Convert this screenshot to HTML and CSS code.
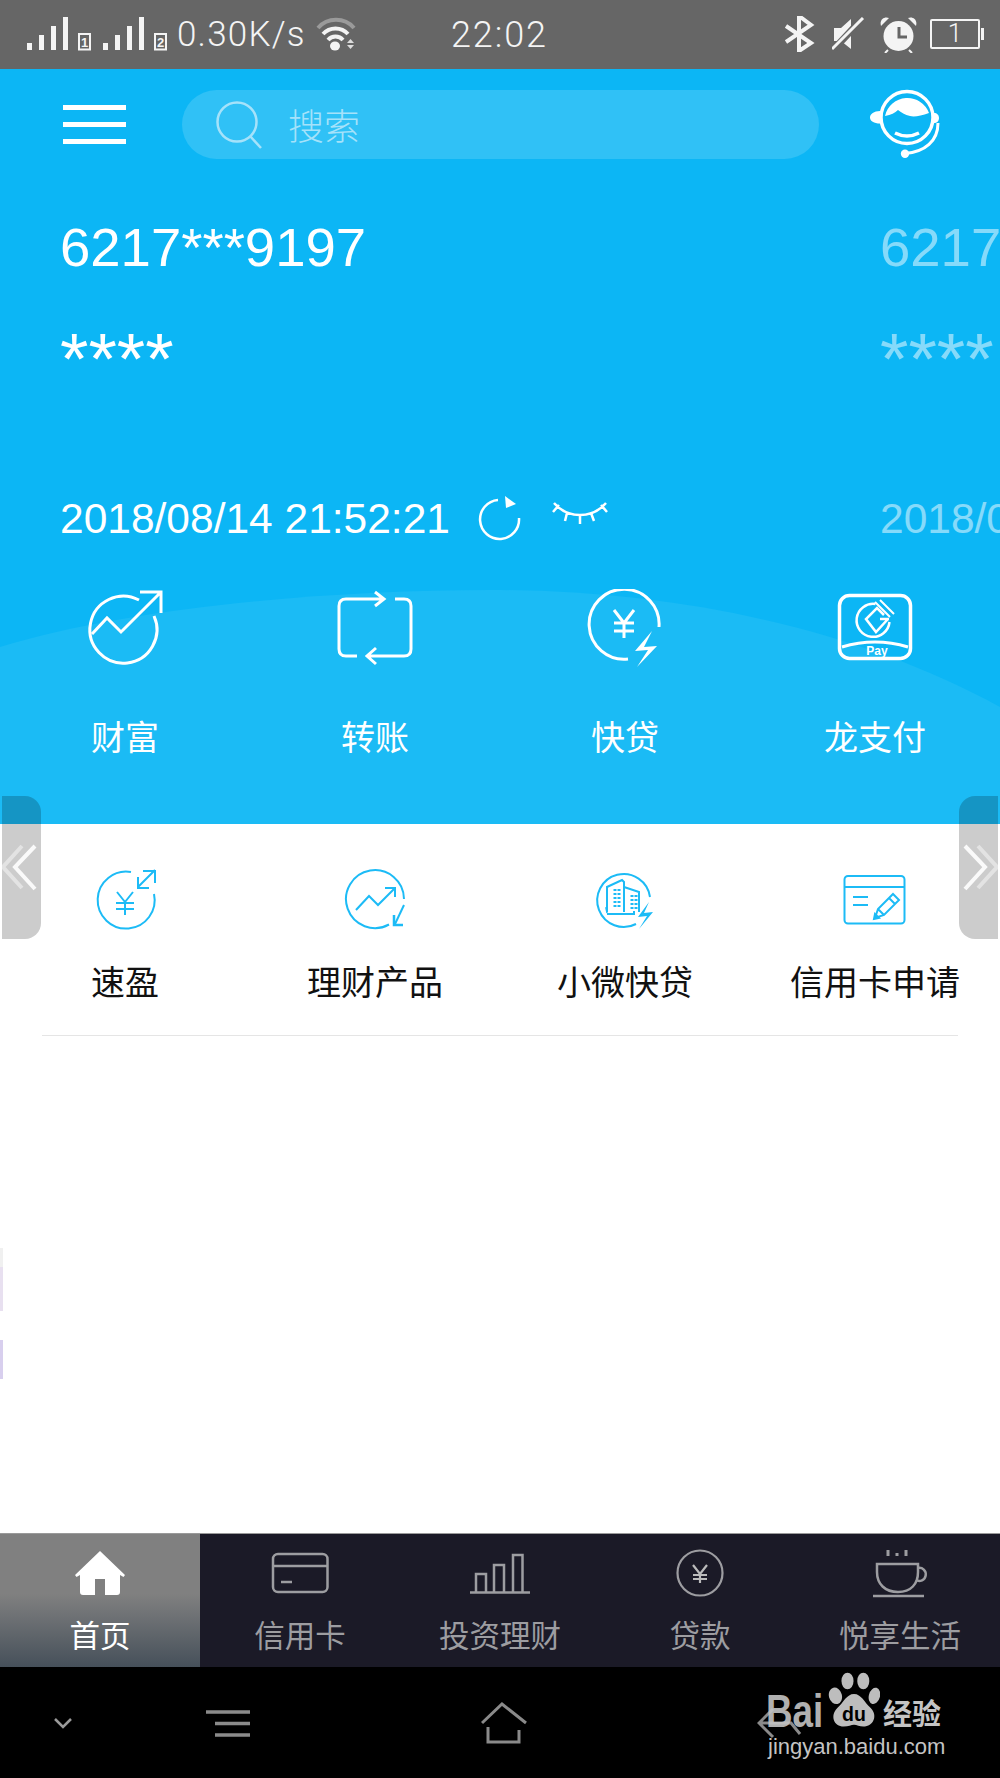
FILE: index.html
```html
<!DOCTYPE html>
<html lang="zh-CN">
<head>
<meta charset="utf-8">
<title>建设银行</title>
<link rel="stylesheet" href="styles.css">
</head>
<body>
<div class="phone">
  <header class="status">
    <svg class="signals" width="145" height="40" viewBox="27 14 145 40">
      <g fill="#f4f4f4">
        <rect x="27" y="43" width="5" height="7"/><rect x="39" y="35" width="5" height="15"/><rect x="51" y="26" width="5" height="24"/><rect x="63" y="17" width="5" height="33"/>
        <rect x="103" y="43" width="5" height="7"/><rect x="115" y="35" width="5" height="15"/><rect x="127" y="26" width="5" height="24"/><rect x="139" y="17" width="5" height="33"/>
      </g>
      <rect x="79" y="34" width="11" height="15.5" fill="none" stroke="#f4f4f4" stroke-width="2"/>
      <rect x="155" y="34" width="11" height="15.5" fill="none" stroke="#f4f4f4" stroke-width="2"/>
      <text x="84.5" y="47" class="sim">1</text>
      <text x="160.5" y="47" class="sim">2</text>
    </svg>
    <span class="speed">0.30K/s</span>
    <svg class="wifi" width="40" height="36" viewBox="315 16 40 36">
      <path d="M317 28a24 24 0 0 1 36 0" fill="none" stroke="#9a9a9a" stroke-width="4"/>
      <path d="M322 34a17 17 0 0 1 25 0" fill="none" stroke="#f4f4f4" stroke-width="4"/>
      <path d="M327 40a10 10 0 0 1 15 0" fill="none" stroke="#f4f4f4" stroke-width="4"/>
      <ellipse cx="334" cy="46" rx="5" ry="4.500" fill="#f4f4f4"/>
      <path d="M346 43l3.500-4 3.500 4zM346 45h7l-3.500 4z" fill="#ddd"/>
    </svg>
    <span class="clock">22:02</span>
    <div class="status-right">
      <svg width="36" height="36" viewBox="784 17 36 36"><path d="M786 27l25 17-12 8V17l12 9-25 17" fill="none" stroke="#f4f4f4" stroke-width="4"/></svg>
      <svg width="36" height="34" viewBox="832 19 36 34"><path d="M834 30h7l10-9v30l-10-8h-7z" fill="#f4f4f4"/><path d="M832 53l31-33" stroke="#666" stroke-width="7"/><path d="M832 51l31-31" stroke="#f4f4f4" stroke-width="3"/></svg>
      <svg width="38" height="37" viewBox="880 16 38 37"><circle cx="898.500" cy="36" r="15" fill="#f4f4f4"/><path d="M881 26c-2-7 4-10 8-8zM916 26c2-7-4-10-8-8z" fill="#f4f4f4"/><path d="M899 27v10h8" fill="none" stroke="#666" stroke-width="3"/><path d="M888 50l-3 3M909 50l3 3" stroke="#f4f4f4" stroke-width="2"/></svg>
      <div class="battery"><span>1</span></div>
    </div>
  </header>

  <main class="hero">
    <svg class="wave" width="1000" height="235" viewBox="0 589 1000 235"><path d="M0 647C130 607 330 590 490 590C680 590 860 630 1000 707V824H0z" fill="#1bbbf5"/></svg>
    <div class="topbar">
      <svg class="menu-icon" width="63" height="39" viewBox="0 0 63 39"><path d="M0 2.500h63M0 19.500h63M0 36.500h63" stroke="#fff" stroke-width="5"/></svg>
      <div class="search">
        <svg width="48" height="48" viewBox="0 0 48 48"><circle cx="21" cy="21" r="19.500" fill="none" stroke="#a5e2fa" stroke-width="2.500"/><path d="M34 35l11 12" stroke="#a5e2fa" stroke-width="2.500"/></svg>
        <span>搜索</span>
      </div>
      <svg class="agent" width="74" height="72" viewBox="868 87 74 72">
        <circle cx="907" cy="116.500" r="26" fill="none" stroke="#fff" stroke-width="3.500"/>
        <path d="M885 115a23 23 0 0 1 44-3c-8 3-15 4-19 3-5-1-9-4-12-6-3 3-7 5-13 6z" fill="#fff"/>
        <path d="M880 110c-6 0-10 3-10 6.500s4 6 10 6zM934 112c3 0 5 2 5 5s-2 5-5 5z" fill="#fff"/>
        <path d="M895 132q12 6 24 0" fill="none" stroke="#fff" stroke-width="3.500"/>
        <path d="M938 122c0 18-13 29-33 30.500" fill="none" stroke="#fff" stroke-width="3"/>
        <circle cx="905" cy="152.700" r="4.200" fill="#fff"/>
      </svg>
    </div>

    <div class="cards">
      <section class="card">
        <div class="card-no">6217***9197</div>
        <div class="card-mask">****</div>
        <div class="card-time">
          <span>2018/08/14 21:52:21</span>
          <svg class="refresh" width="46" height="46" viewBox="477 494 46 46"><path d="M498 499a19.500 19.500 0 1 0 21 18" fill="none" stroke="#fff" stroke-width="2.500"/><path d="M505 495l11 8-10 4z" fill="#fff"/></svg>
          <svg class="eye" width="58" height="26" viewBox="552 504 58 26"><path d="M555 507c14 16 38 16 52 0M554 516l6-7M566 525l2-8M581 528v-9M595 525l-3-8M608 516l-6-7" fill="none" stroke="#fff" stroke-width="2.500"/></svg>
        </div>
      </section>
      <section class="card card-next">
        <div class="card-no">6217***9197</div>
        <div class="card-mask">****</div>
        <div class="card-time"><span>2018/08/14 21:52:21</span></div>
      </section>
    </div>

    <nav class="quick">
      <a class="quick-item">
        <svg width="80" height="80" viewBox="84 590 80 80" fill="none" stroke="#fff" stroke-width="3">
          <path d="M138 601a33.500 33.500 0 1 0 15 16"/>
          <path d="M91 635l15-16 14 14 40-40M139 593h21v21"/>
        </svg>
        <span>财富</span>
      </a>
      <a class="quick-item">
        <svg width="80" height="80" viewBox="335 590 80 80" fill="none" stroke="#fff" stroke-width="3">
          <path d="M384 600h-38q-7 0-7 7v43q0 7 7 7h11M395 600h9q7 0 7 7v43q0 7-7 7h-37M375 593l9 7-9 7M376 649l-9 8 9 8"/>
        </svg>
        <span>转账</span>
      </a>
      <a class="quick-item">
        <svg width="80" height="80" viewBox="585 590 80 80" fill="none" stroke="#fff" stroke-width="3">
          <path d="M659 628a35 35 0 1 0-31 32"/>
          <path d="M614 611l10 13 10-13M624 624v15M614 624h20M614 632h20"/>
          <path d="M652 632l-17 20 13-1-11 17 20-21-13 1z" fill="#fff" stroke="none"/>
        </svg>
        <span>快贷</span>
      </a>
      <a class="quick-item">
        <svg width="80" height="80" viewBox="835 590 80 80" fill="none" stroke="#fff" stroke-width="3">
          <rect x="839.500" y="596.500" width="71" height="63" rx="10" stroke-width="3.500"/>
          <path d="M842 648q33-10 66 0" stroke-width="3"/>
          <path d="M889.500 623a16.500 16.500 0 1 1-14-18" stroke-width="2.500"/>
          <path d="M889 620h-9M888 620l-12 13-10-13 11-11 7 7" stroke-width="2.500"/>
          <path d="M875 603l15 15M880 601l14 14" stroke-width="2"/>
          <text x="877" y="655.500" class="pay">Pay</text>
        </svg>
        <span>龙支付</span>
      </a>
    </nav>
  </main>

  <section class="services">
    <div class="service-row">
      <a class="service-item">
        <svg width="80" height="64" viewBox="84 868 80 64" fill="none" stroke="#1cbbf6" stroke-width="2">
          <path d="M130 872a28.500 28.500 0 1 0 23 22"/>
          <path d="M137 887l17-17M142 871h12v12M137 877v11h11"/>
          <path d="M116 892l8 10 8-10M124 902v13M115 903h18M115 909h18"/>
        </svg>
        <span>速盈</span>
      </a>
      <a class="service-item">
        <svg width="80" height="64" viewBox="334 868 80 64" fill="none" stroke="#1cbbf6" stroke-width="2">
          <path d="M403 899a29 29 0 1 0-15 25.500"/>
          <path d="M355 910l13-14 9 9 17-17M384 888h10v9"/>
          <path d="M393 915v10h9" stroke-width="2.500"/>
          <path d="M403 905l-9 19" stroke-width="2"/>
        </svg>
        <span>理财产品</span>
      </a>
      <a class="service-item">
        <svg width="80" height="64" viewBox="585 868 80 64" fill="none" stroke="#1cbbf6" stroke-width="2">
          <path d="M650 897a26.500 26.500 0 1 0-14 27"/>
          <path d="M607 912v-25l15-7 2 2v30M624 887l15 5v20M607 914h27v-3"/>
          <path d="M607 913l-1-5h2" stroke-width="1.500"/>
          <path d="M615 889v20M619 889v20M632 895v14M636 895v14" stroke-width="3" stroke-dasharray="2 2"/>
          <path d="M649 902l-11 15 9-1-8 13 14-17-9 1z" fill="#1cbbf6" stroke="none"/>
        </svg>
        <span>小微快贷</span>
      </a>
      <a class="service-item">
        <svg width="80" height="64" viewBox="835 868 80 64" fill="none" stroke="#1cbbf6" stroke-width="2">
          <rect x="844.500" y="876" width="60" height="47.500" rx="3.500"/>
          <path d="M845 887h60M853 897h15M853 905h15"/>
          <path d="M875 918l3-9 15-15 6 6-15 15zM878 909l6 6M889 898l6 6"/>
          <path d="M874 919l1-5 4 4z" fill="#1cbbf6"/>
        </svg>
        <span>信用卡申请</span>
      </a>
    </div>
    <div class="divider"></div>
    <div class="edge-noise"></div>
  </section>

  <nav class="tabs">
    <a class="tab tab-active">
      <svg width="60" height="52" viewBox="70 1548 60 52"><path d="M100 1551l25 24-1.500 2-3.500-2v17q0 3-3 3h-12v-16h-10v16h-12q-3 0-3-3v-17l-3.500 2-1.500-2z" fill="#fff"/></svg>
      <span>首页</span>
    </a>
    <a class="tab">
      <svg width="60" height="52" viewBox="270 1548 60 52" fill="none" stroke="#9d9da1" stroke-width="2.500"><rect x="273" y="1554" width="54.500" height="38" rx="5"/><path d="M273 1566h55M281 1582h11"/></svg>
      <span>信用卡</span>
    </a>
    <a class="tab">
      <svg width="62" height="52" viewBox="470 1548 62 52" fill="none" stroke="#9d9da1" stroke-width="2.500"><path d="M471 1592.500h60M477 1592v-18h10v18M495 1592v-27h10v27M514 1592v-37h9.500v37"/></svg>
      <span>投资理财</span>
    </a>
    <a class="tab">
      <svg width="60" height="52" viewBox="670 1548 60 52" fill="none" stroke="#9d9da1" stroke-width="2.200"><circle cx="700" cy="1573" r="22.500"/><path d="M693 1565l7 9 7-9M700 1574v9M693 1575h14M693 1579h14" stroke="#bbb"/></svg>
      <span>贷款</span>
    </a>
    <a class="tab">
      <svg width="60" height="52" viewBox="870 1548 60 52" fill="none" stroke="#9d9da1" stroke-width="2.500"><path d="M877 1564h41v8c0 12-7 20-20 20s-21-8-21-20z"/><path d="M918 1568a6.500 6.500 0 1 1-2 12M873 1596h51"/><path d="M888 1550v6M897 1553v3M906 1550v6" stroke-width="3"/></svg>
      <span>悦享生活</span>
    </a>
  </nav>

  <footer class="navbar">
    <svg width="20" height="12" viewBox="0 0 20 12"><path d="M2 2l8 8 8-8" fill="none" stroke="#9a9a9a" stroke-width="2.500"/></svg>
    <svg width="46" height="28" viewBox="0 0 46 28"><path d="M0 3h44M9 14.500h35M9 26h35" stroke="#8a8a8a" stroke-width="3.500"/></svg>
    <svg width="48" height="42" viewBox="481 1701 48 42" fill="none" stroke="#8a8a8a" stroke-width="3"><path d="M482 1722l20-19 24 19M488 1726v15h31v-12"/></svg>
    <svg width="46" height="32" viewBox="756 1706 46 32" fill="none" stroke="#8a8a8a" stroke-width="3"><path d="M772 1708l-14 14 14 14M758 1722h32l9 11"/></svg>
  </footer>

  <div class="handle handle-left">
    <svg width="39" height="143" viewBox="2 796 39 143" fill="none" stroke="#fff" stroke-width="4"><path d="M22 846l-19 21 19 21" stroke-opacity=".45"/><path d="M35 846l-20 21 20 22" stroke-opacity=".9"/></svg>
  </div>
  <div class="handle handle-right">
    <svg width="39" height="143" viewBox="959 796 39 143" fill="none" stroke="#fff" stroke-width="4"><path d="M978 846l19 21-19 21" stroke-opacity=".45"/><path d="M965 846l20 21-20 22" stroke-opacity=".9"/></svg>
  </div>

  <div class="watermark">
    <span class="wm-bai">Bai</span>
    <svg class="wm-paw" width="52" height="57" viewBox="0 0 56 60">
      <g fill="#bdbdbd">
        <ellipse cx="8" cy="25" rx="7" ry="9" transform="rotate(-15 8 25)"/>
        <ellipse cx="21" cy="9" rx="6.500" ry="9"/>
        <ellipse cx="38" cy="9" rx="6.500" ry="9"/>
        <ellipse cx="50" cy="25" rx="6" ry="9" transform="rotate(15 50 25)"/>
        <path d="M28 23c8 0 11 9 18 15 8 8 3 20-8 20-4 0-7-2-10-2s-6 2-11 2C6 58 2 46 10 38c7-6 10-15 18-15z"/>
      </g>
      <text x="28" y="52" class="wm-du">du</text>
    </svg>
    <span class="wm-cn">经验</span>
    <span class="wm-url">jingyan.baidu.com</span>
  </div>
</div>
</body>
</html>
```

FILE: styles.css
```css
* { box-sizing: border-box; }
html, body { margin: 0; padding: 0; background: #fff; }
body { font-family: "Noto Sans CJK SC", "Liberation Sans", sans-serif; }
a { color: inherit; text-decoration: none; }
svg { display: block; flex: none; }

.phone {
  position: relative;
  width: 1000px;
  height: 1778px;
  overflow: hidden;
  display: flex;
  flex-direction: column;
}

/* status bar */
.status {
  height: 69px;
  background: #666;
  color: #f4f4f4;
  display: flex;
  align-items: flex-start;
  padding: 14px 20px 0 27px;
  font-family: Roboto, "Liberation Sans", sans-serif;
  font-weight: 300;
  font-size: 35px;
  line-height: 42px;
}
.sim { font: 700 13px "Liberation Sans", sans-serif; fill: #f4f4f4; text-anchor: middle; }
.speed { margin-left: 5px; width: 139px; letter-spacing: 1.2px; }
.wifi { margin-top: 2px; }
.clock { margin-left: 95px; font-size: 36px; letter-spacing: 1.9px; }
.status-right {
  margin-left: auto;
  display: flex;
  align-items: center;
  gap: 12px;
  height: 40px;
}
.battery {
  position: relative;
  width: 50px;
  height: 30px;
  border: 2.5px solid #f4f4f4;
  border-radius: 2px;
  font-size: 26px;
  line-height: 25px;
  text-align: center;
}
.battery::after {
  content: "";
  position: absolute;
  right: -6px;
  top: 7px;
  width: 3px;
  height: 12px;
  background: #f4f4f4;
}

/* hero */
.hero {
  position: relative;
  height: 755px;
  background: #0cb6f5;
  color: #fff;
}
.wave { position: absolute; left: 0; bottom: 0; }
.topbar {
  position: relative;
  display: flex;
  align-items: center;
  padding: 19px 58px 0 63px;
}
.search {
  flex: 1;
  height: 69px;
  margin: 0 49px 0 56px;
  padding-left: 34px;
  border-radius: 35px;
  background: #30c1f6;
  color: #a5e2fa;
  display: flex;
  align-items: center;
  gap: 24px;
  font-size: 36px;
  font-weight: 300;
}
.search svg { margin-top: 1px; }

.cards {
  position: relative;
  display: flex;
  overflow: hidden;
  margin-top: 58px;
  padding-left: 60px;
  gap: 460px;
}
.card { flex: none; width: 360px; }
.card-next { opacity: .5; }
.card-no {
  font: 54.5px/60px "Liberation Sans", sans-serif;
  white-space: nowrap;
}
.card-mask {
  margin-top: 39px;
  height: 60px;
  font: 73px/84px "Liberation Sans", sans-serif;
  white-space: nowrap;
}
.card-time {
  margin-top: 118px;
  height: 48px;
  display: flex;
  align-items: center;
  font: 42.500px/48px "Liberation Sans", sans-serif;
  white-space: nowrap;
}
.refresh { margin-left: 27px; margin-top: -2px; }
.eye { margin-left: 28px; margin-top: -12px; }

.quick {
  position: relative;
  display: grid;
  grid-template-columns: repeat(4, 250px);
  margin-top: 46px;
}
.quick-item {
  display: flex;
  flex-direction: column;
  align-items: center;
  font-size: 34px;
  line-height: 46px;
}
.quick-item span { margin-top: 44px; }
.pay { font: 700 12px "Liberation Sans", sans-serif; fill: #fff; stroke: none; text-anchor: middle; }

/* services */
.services {
  position: relative;
  flex: 1;
  background: #fff;
}
.service-row {
  display: grid;
  grid-template-columns: repeat(4, 250px);
  padding-top: 44px;
}
.service-item {
  display: flex;
  flex-direction: column;
  align-items: center;
  font-size: 34px;
  line-height: 46px;
  color: #111;
}
.service-item span { margin-top: 26px; white-space: nowrap; }
.divider {
  height: 1px;
  margin: 31px 42px 0;
  background: #e5e5e5;
}
.edge-noise {
  position: absolute;
  left: 0;
  top: 424px;
  width: 3px;
  height: 192px;
  background: linear-gradient(#f0f0f0 0 10%, #e8e0f0 10% 33%, #fff 33% 48%, #d8cfee 48% 68%, #fff 68%);
}

/* bottom tabs */
.tabs {
  height: 134px;
  background: #1b1a27;
  border-top: 1px solid #9a9a9a;
  display: grid;
  grid-template-columns: repeat(5, 200px);
  color: #9d9da1;
}
.tab {
  display: flex;
  flex-direction: column;
  align-items: center;
  padding-top: 14px;
  font-size: 30.500px;
  line-height: 40px;
}
.tab span { margin-top: 14px; white-space: nowrap; }
.tab-active {
  background: linear-gradient(#808080 0 45%, #46505a 100%);
  color: #fff;
}

/* system nav bar */
.navbar {
  height: 111px;
  background: #000;
  display: grid;
  grid-template-columns: 153px 275px 276px auto;
  align-items: center;
  padding-left: 53px;
}

/* overlays */
.handle {
  position: absolute;
  top: 796px;
  width: 39px;
  height: 143px;
  background: rgba(0, 0, 0, .2);
}
.handle-left { left: 2px; border-radius: 0 16px 16px 0; }
.handle-right { left: 959px; border-radius: 16px 0 0 16px; }

.watermark {
  position: absolute;
  left: 766px;
  top: 1672px;
  width: 185px;
  height: 90px;
  color: #c4c4c4;
}
.wm-bai {
  position: absolute;
  left: 0;
  top: 20px;
  font: 700 46px/38px "Liberation Sans", sans-serif;
  transform: scaleX(.8);
  transform-origin: left center;
  opacity: .9;
}
.wm-paw { position: absolute; left: 62px; top: 0; }
.wm-du { font: 700 21px "Liberation Sans", sans-serif; fill: #000; text-anchor: middle; }
.wm-cn {
  position: absolute;
  left: 117px;
  top: 20px;
  font-size: 29px;
  font-weight: 700;
  line-height: 40px;
  white-space: nowrap;
}
.wm-url {
  position: absolute;
  left: 2px;
  top: 62px;
  font: 22px/26px "Liberation Sans", sans-serif;
  white-space: nowrap;
}
```
